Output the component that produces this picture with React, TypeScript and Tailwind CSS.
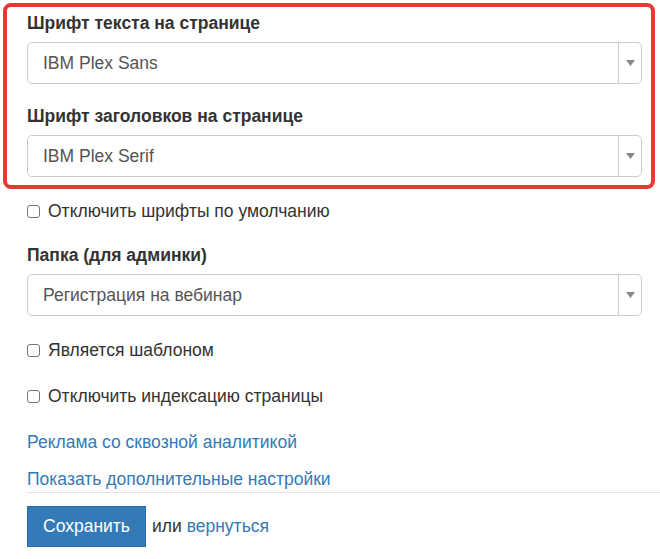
const Select = ({ value }: { value: string }) => {
  return (
    <div className="flex h-[42px] items-stretch rounded-[5px] border border-[#cccccc] bg-white">
      <div className="flex flex-1 items-center pl-[15px] text-[#555555]">{value}</div>
      <div className="flex w-[23px] items-center justify-center border-l border-[#cccccc]">
        <svg width="9" height="6" viewBox="0 0 9 6">
          <path d="M0 0 L9 0 L4.5 6 Z" fill="#888888" />
        </svg>
      </div>
    </div>
  );
};

const Check = ({ label }: { label: string }) => {
  return (
    <label className="flex h-[25px] items-center gap-[8px] text-[#333333]">
      <span className="h-[13px] w-[13px] rounded-[3px] border border-[#767676] bg-white" />
      <span>{label}</span>
    </label>
  );
};

const App = () => {
  return (
    <div
      className="h-[559px] w-[660px] overflow-hidden bg-white pl-[27px] pr-[18px] pt-[3px] text-[17.5px] leading-[25px] text-[#333333]"
      style={{ fontFamily: '"Liberation Sans", Arial, sans-serif' }}
    >
      {/* Highlighted fonts block */}
      <div className="-ml-[24px] -mr-[13px] rounded-[8px] border-4 border-[#e53a30] pb-[8px] pl-[20px] pr-[9px] pt-[4px]">
        <div className="mb-[20px]">
          <div className="mb-[6px] font-bold">Шрифт текста на странице</div>
          <Select value="IBM Plex Sans" />
        </div>
        <div>
          <div className="mb-[6px] font-bold">Шрифт заголовков на странице</div>
          <Select value="IBM Plex Serif" />
        </div>
      </div>

      <div className="mt-[10px]">
        <Check label="Отключить шрифты по умолчанию" />
      </div>

      <div className="mt-[19px]">
        <div className="mb-[6px] font-bold">Папка (для админки)</div>
        <Select value="Регистрация на вебинар" />
      </div>

      <div className="mt-[22px]">
        <Check label="Является шаблоном" />
      </div>
      <div className="mt-[21px]">
        <Check label="Отключить индексацию страницы" />
      </div>

      <div className="mt-[21px]">
        <a href="#" className="text-[#337ab7]">
          Реклама со сквозной аналитикой
        </a>
      </div>
      <div className="mt-[12px]">
        <a href="#" className="text-[#337ab7]">
          Показать дополнительные настройки
        </a>
      </div>

      <div className="-mr-[18px] border-t border-[#e5e5e5]" />

      <div className="mt-[13px] flex items-center gap-[6px]">
        <button className="h-[41px] w-[119px] border border-[#2e6da4] bg-[#337ab7] text-white">
          Сохранить
        </button>
        <span>
          или{" "}
          <a href="#" className="text-[#337ab7]">
            вернуться
          </a>
        </span>
      </div>
    </div>
  );
};

export default App;
